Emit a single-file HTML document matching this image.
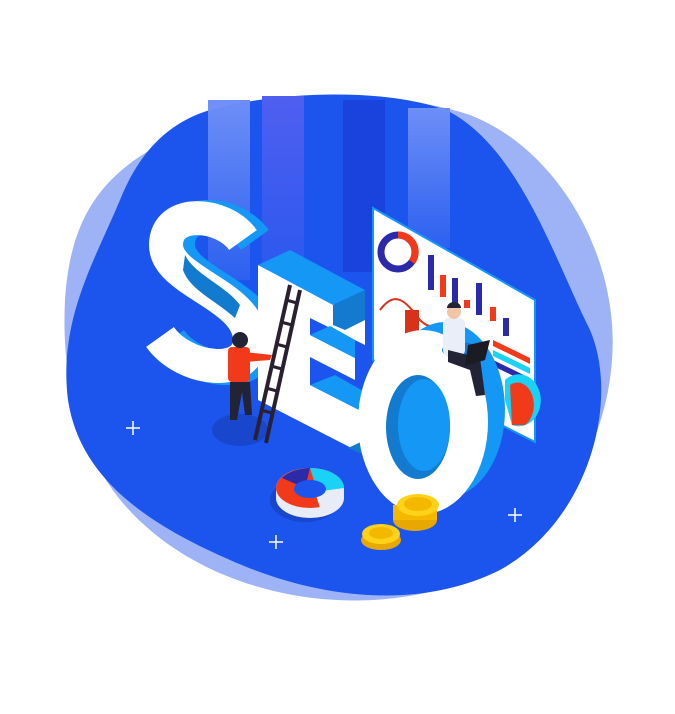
<!DOCTYPE html>
<html><head><style>html,body{margin:0;padding:0;background:#fff;width:675px;height:714px;overflow:hidden}</style></head>
<body>
<svg width="675" height="714" viewBox="0 0 675 714" xmlns="http://www.w3.org/2000/svg">
<defs>
<linearGradient id="st" x1="0" y1="0" x2="0" y2="1"><stop offset="0" stop-color="#6d8ef7"/><stop offset="1" stop-color="#6d8ef7" stop-opacity="0.2"/></linearGradient>
<linearGradient id="st2" x1="0" y1="0" x2="0" y2="1"><stop offset="0" stop-color="#4f5ff0"/><stop offset="1" stop-color="#4f5ff0" stop-opacity="0.3"/></linearGradient>
</defs>
<path d="M150 150 C230 95 380 85 470 115 C560 150 620 260 612 360 C605 460 540 560 430 592 C330 615 220 590 150 530 C90 480 60 400 65 300 C70 220 100 180 150 150Z" fill="#9db3f6"/>
<path d="M210 110 C290 88 400 90 450 112 C520 150 555 260 590 330 C620 400 590 520 500 570 C420 610 320 600 230 560 C150 525 80 480 68 400 C58 320 95 260 120 200 C140 150 170 122 210 110Z" fill="#1c55ed"/>
<rect x="208" y="100" width="42" height="180" fill="url(#st)"/>
<rect x="262" y="96" width="42" height="180" fill="url(#st2)"/>
<rect x="343" y="100" width="42" height="172" fill="#1a42dd"/>
<rect x="408" y="108" width="42" height="140" fill="url(#st)"/>
<ellipse cx="240" cy="430" rx="28" ry="16" fill="#1846cc"/>
<ellipse cx="305" cy="500" rx="35" ry="22" fill="#1846cc"/>
<!-- S -->
<path d="M255 240 C235 212 178 205 178 245 C178 282 262 295 262 340 C262 380 195 375 170 340" fill="none" stroke="#1597f5" stroke-width="34"/>
<path d="M243 240 C223 212 166 208 166 245 C166 282 250 295 250 340 C250 378 185 372 160 337" fill="none" stroke="#fff" stroke-width="34"/>
<path d="M185 255 C195 275 225 285 240 305 L235 318 C215 300 190 290 183 270Z" fill="#127bcf"/>
<!-- E -->
<path d="M258 265 L365 320 L365 345 L310 318 L310 335 L355 358 L355 380 L310 357 L310 385 L365 413 L365 455 L258 400Z" fill="#fff"/>
<path d="M258 265 L290 250 L365 290 L333 305Z" fill="#1597f5"/>
<path d="M333 305 L365 290 L365 320 L345 330 L333 325Z" fill="#127bcf"/>
<path d="M310 335 L330 326 L355 340 L355 358Z" fill="#1597f5"/>
<path d="M310 385 L335 375 L365 392 L365 413Z" fill="#1597f5"/>
<path d="M348 448 L365 440 L365 455Z" fill="#127bcf"/>
<!-- chart panel -->
<path d="M373 208 L535 300 L535 442 L373 360Z" fill="#fff" stroke="#1597f5" stroke-width="2"/>
<circle cx="398" cy="252" r="17" fill="none" stroke="#2b2aa8" stroke-width="7"/>
<path d="M398 235 A17 17 0 0 1 412 262" fill="none" stroke="#f03a1a" stroke-width="7"/>
<rect x="428" y="255" width="6" height="35" fill="#2b2aa8"/>
<rect x="440" y="275" width="6" height="22" fill="#f03a1a"/>
<rect x="452" y="278" width="6" height="25" fill="#2b2aa8"/>
<rect x="464" y="300" width="6" height="8" fill="#f03a1a"/>
<rect x="476" y="283" width="6" height="32" fill="#2b2aa8"/>
<rect x="490" y="307" width="6" height="14" fill="#f03a1a"/>
<rect x="503" y="318" width="6" height="18" fill="#2b2aa8"/>
<path d="M380 310 C395 290 405 300 420 320 C430 330 435 325 445 325" fill="none" stroke="#d8321b" stroke-width="2"/>
<rect x="405" y="310" width="14" height="30" fill="#d8321b"/>
<path d="M493 340 L530 358 L530 364 L493 346Z" fill="#f03a1a"/>
<path d="M493 350 L530 368 L530 374 L493 356Z" fill="#19d2f5"/>
<path d="M493 360 L530 378 L530 384 L493 366Z" fill="#2b2aa8"/>
<path d="M505 380 A22 26 0 1 1 512 425 L505 400Z" fill="#19d2f5"/>
<path d="M510 385 A16 22 0 0 1 525 425 L512 425Z" fill="#f03a1a"/>
<!-- O -->
<ellipse cx="445" cy="410" rx="60" ry="88" fill="#1597f5"/>
<ellipse cx="423" cy="422" rx="65" ry="92" fill="#fff"/>
<ellipse cx="418" cy="427" rx="32" ry="52" fill="#127bcf"/>
<ellipse cx="424" cy="425" rx="26" ry="46" fill="#1597f5"/>
<!-- man on O -->
<ellipse cx="460" cy="350" rx="18" ry="8" fill="#1377d6"/>
<rect x="443" y="318" width="22" height="38" rx="6" fill="#e9eef8"/>
<circle cx="454" cy="312" r="7" fill="#f2c6a5"/>
<path d="M447 308 A7 6 0 0 1 461 308Z" fill="#232336"/>
<path d="M448 350 L480 358 L485 395 L476 396 L470 370 L448 362Z" fill="#232336"/>
<path d="M468 345 L490 340 L485 360 L465 366Z" fill="#1b1b24"/>
<!-- ladder man -->
<path d="M290 285 L255 440 M300 290 L266 443" stroke="#2a2030" stroke-width="4"/>
<g stroke="#2a2030" stroke-width="3"><line x1="286" y1="300" x2="297" y2="303"/><line x1="281" y1="322" x2="292" y2="325"/><line x1="276" y1="344" x2="287" y2="347"/><line x1="271" y1="366" x2="282" y2="369"/><line x1="266" y1="388" x2="277" y2="391"/><line x1="261" y1="410" x2="272" y2="413"/></g>
<rect x="228" y="347" width="22" height="35" rx="4" fill="#f03a1a"/>
<path d="M245 352 L272 355 L270 360 L245 362Z" fill="#f03a1a"/>
<circle cx="240" cy="340" r="8" fill="#232336"/>
<path d="M230 382 L250 382 L252 415 L245 415 L242 392 L237 420 L230 420Z" fill="#232336"/>
<!-- donut chart -->
<ellipse cx="310" cy="495" rx="34" ry="20" fill="#d8321b"/>
<path d="M276 488 A34 20 0 0 1 344 488 L344 498 A34 20 0 0 1 276 498Z" fill="#e8ecf6"/>
<ellipse cx="310" cy="488" rx="34" ry="20" fill="#f03a1a"/>
<path d="M310 468 A34 20 0 0 1 344 488 L320 500 Z" fill="#19d2f5"/>
<path d="M282 478 A34 20 0 0 1 310 468 L305 488Z" fill="#2b2aa8"/>
<path d="M344 488 A34 20 0 0 1 320 508 L315 492Z" fill="#e8ecf6"/>
<ellipse cx="310" cy="489" rx="16" ry="9" fill="#1c55ed"/>
<!-- coins -->
<ellipse cx="415" cy="520" rx="22" ry="11" fill="#e9a800"/>
<rect x="393" y="505" width="44" height="15" fill="#f4b800"/>
<ellipse cx="418" cy="505" rx="21" ry="11" fill="#ffd21a"/>
<ellipse cx="418" cy="504" rx="14" ry="7" fill="#f4b800"/>
<ellipse cx="381" cy="540" rx="20" ry="10" fill="#e9a800"/>
<ellipse cx="381" cy="534" rx="19" ry="10" fill="#ffd21a"/>
<ellipse cx="381" cy="533" rx="12" ry="6" fill="#f4b800"/>
<g stroke="#fff" stroke-width="1.5"><path d="M126 428h14M133 421v14"/><path d="M269 542h14M276 535v14"/><path d="M508 515h14M515 508v14"/></g>
</svg>
</body></html>
